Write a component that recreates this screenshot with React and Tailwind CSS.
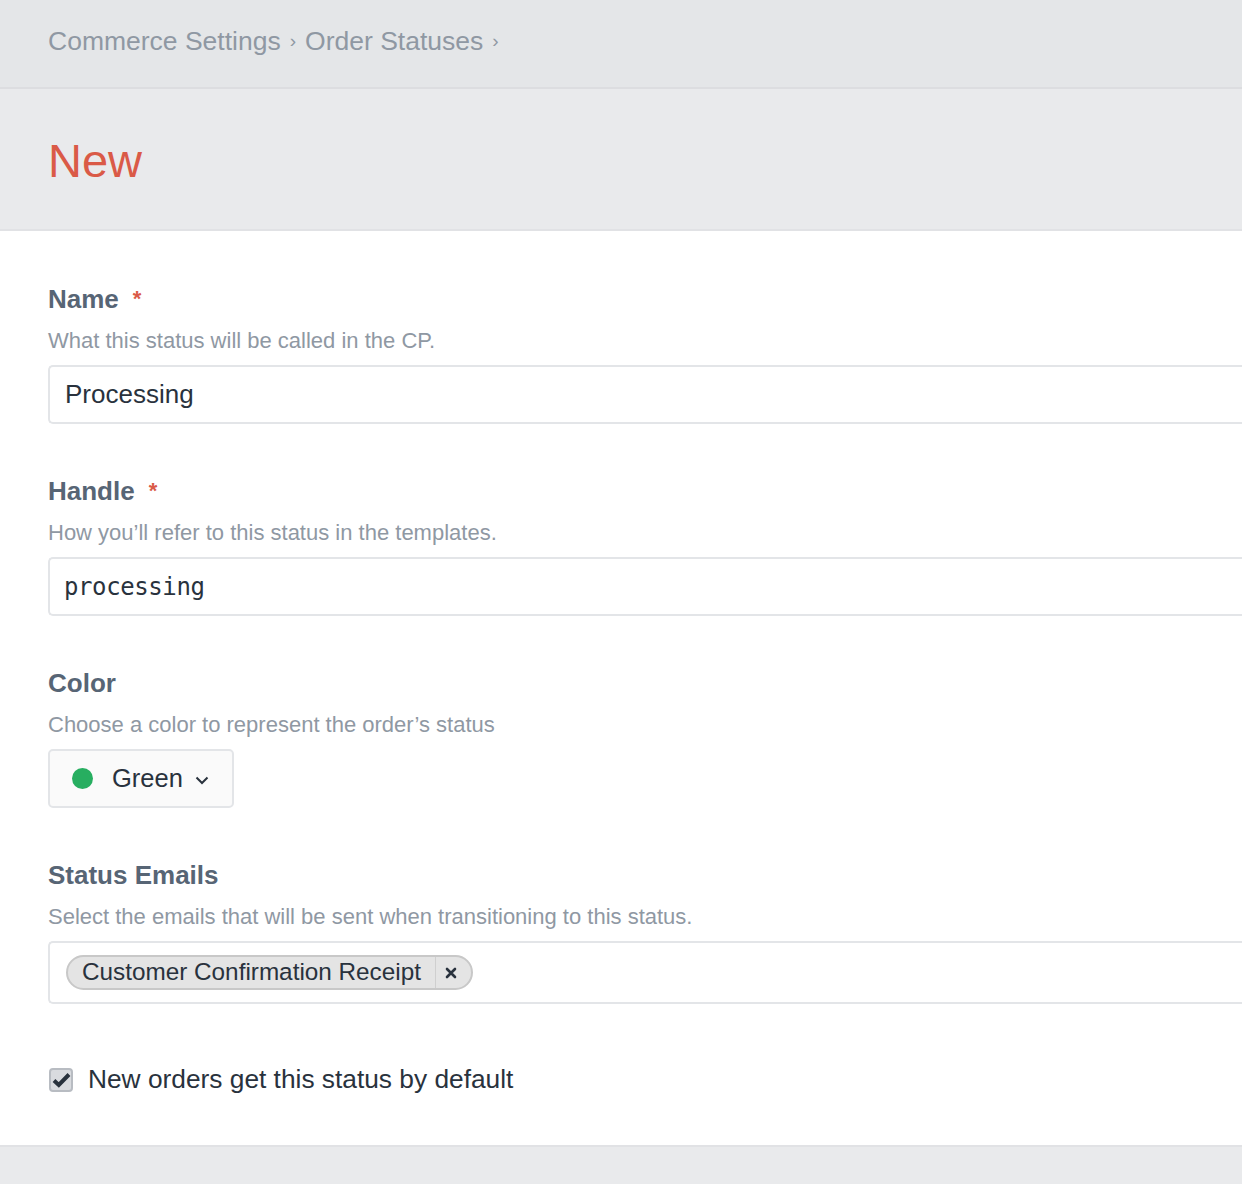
import React from 'react';

const Field = ({ label, required, hint, children, className = '' }) => (
    <div className={className}>
        <div className="flex items-center h-[30px]">
            <span className="text-[26px] font-bold text-[#576575] leading-none">{label}</span>
            {required && <span className="ml-[14px] text-[22px] font-bold text-[#da5a47] leading-none">*</span>}
        </div>
        <div className="mt-[14px] text-[22px] text-[#8f98a3] leading-[26px]">{hint}</div>
        <div className="mt-[11px]">{children}</div>
    </div>
);

export default function App() {
    return (
        <div className="min-h-[1184px] w-[1242px] overflow-hidden bg-[#e9eaec] font-['Liberation_Sans',Arial,sans-serif]">
            {/* Breadcrumb bar */}
            <div className="h-[89px] bg-[#e4e6e8] border-b-2 border-[#dcdde0] flex items-center px-12 pb-[4px]">
                <div className="flex items-center text-[26.5px] text-[#8f98a3]">
                    <span>Commerce Settings</span>
                    <span className="mx-[9px] text-[19px]">›</span>
                    <span>Order Statuses</span>
                    <span className="ml-[9px] text-[19px]">›</span>
                </div>
            </div>

            {/* Title */}
            <div className="h-[142px] bg-[#e9eaec] border-b-2 border-[#e1e2e5] flex items-center px-12">
                <h1 className="text-[47px] text-[#da5a47] leading-none pt-[2px]">New</h1>
            </div>

            {/* Form */}
            <div className="bg-white border-b-2 border-[#e1e2e5] pl-12 pt-[53px] pb-[46px]">
                <Field label="Name" required hint="What this status will be called in the CP.">
                    <div className="h-[59px] border-2 border-r-0 border-[#e3e5e8] rounded-l-[5px] flex items-center px-[15px] text-[26px] text-[#29323d]">
                        Processing
                    </div>
                </Field>

                <Field className="mt-[52px]" label="Handle" required hint="How you’ll refer to this status in the templates.">
                    <div className="h-[59px] border-2 border-r-0 border-[#e3e5e8] rounded-l-[5px] flex items-center px-[14px] text-[24px] text-[#29323d] font-['DejaVu_Sans_Mono',monospace] tracking-[-0.4px]">
                        processing
                    </div>
                </Field>

                <Field className="mt-[52px]" label="Color" hint="Choose a color to represent the order’s status">
                    <div className="inline-flex h-[59px] w-[186px] border-2 border-[#e3e5e8] rounded-[5px] bg-[#fafafa] items-center pl-[22px]">
                        <span className="w-[21px] h-[21px] rounded-full bg-[#27ae60]" />
                        <span className="ml-[19px] text-[25.5px] text-[#29323d]">Green</span>
                        <svg className="ml-[12px] mt-[3px]" width="14" height="9" viewBox="0 0 14 9" fill="none">
                            <path d="M1.5 1.5L7 7L12.5 1.5" stroke="#29323d" strokeWidth="2" />
                        </svg>
                    </div>
                </Field>

                <Field className="mt-[52px]" label="Status Emails" hint="Select the emails that will be sent when transitioning to this status.">
                    <div className="h-[63px] border-2 border-r-0 border-[#e3e5e8] rounded-l-[5px] flex items-center pl-[16px]">
                        <div className="flex items-center h-[35px] rounded-full border-2 border-[#c8c8c8] bg-[#e4e4e4]">
                            <span className="pl-[14px] pr-[14px] text-[24.3px] text-[#29323d] leading-none">Customer Confirmation Receipt</span>
                            <span className="h-full border-l border-[#cfcfcf] flex items-center pl-[9px] pr-[14px]">
                                <svg width="12" height="12" viewBox="0 0 12 12">
                                    <path d="M2 2L10 10M10 2L2 10" stroke="#29323d" strokeWidth="2.6" strokeLinecap="round" />
                                </svg>
                            </span>
                        </div>
                    </div>
                </Field>

                <label className="mt-[56px] flex items-center">
                    <span className="w-[24px] h-[24px] ml-[1px] rounded-[4px] border-2 border-[#b8bcc2] bg-[#d9dbdf] flex items-center justify-center">
                        <svg width="19" height="16" viewBox="0 0 19 16">
                            <path d="M2 8.5L6.8 13L17 2.5" stroke="#29323d" strokeWidth="4" fill="none" strokeLinejoin="miter" />
                        </svg>
                    </span>
                    <span className="ml-[15px] text-[26.3px] text-[#29323d]">New orders get this status by default</span>
                </label>
            </div>
        </div>
    );
}
